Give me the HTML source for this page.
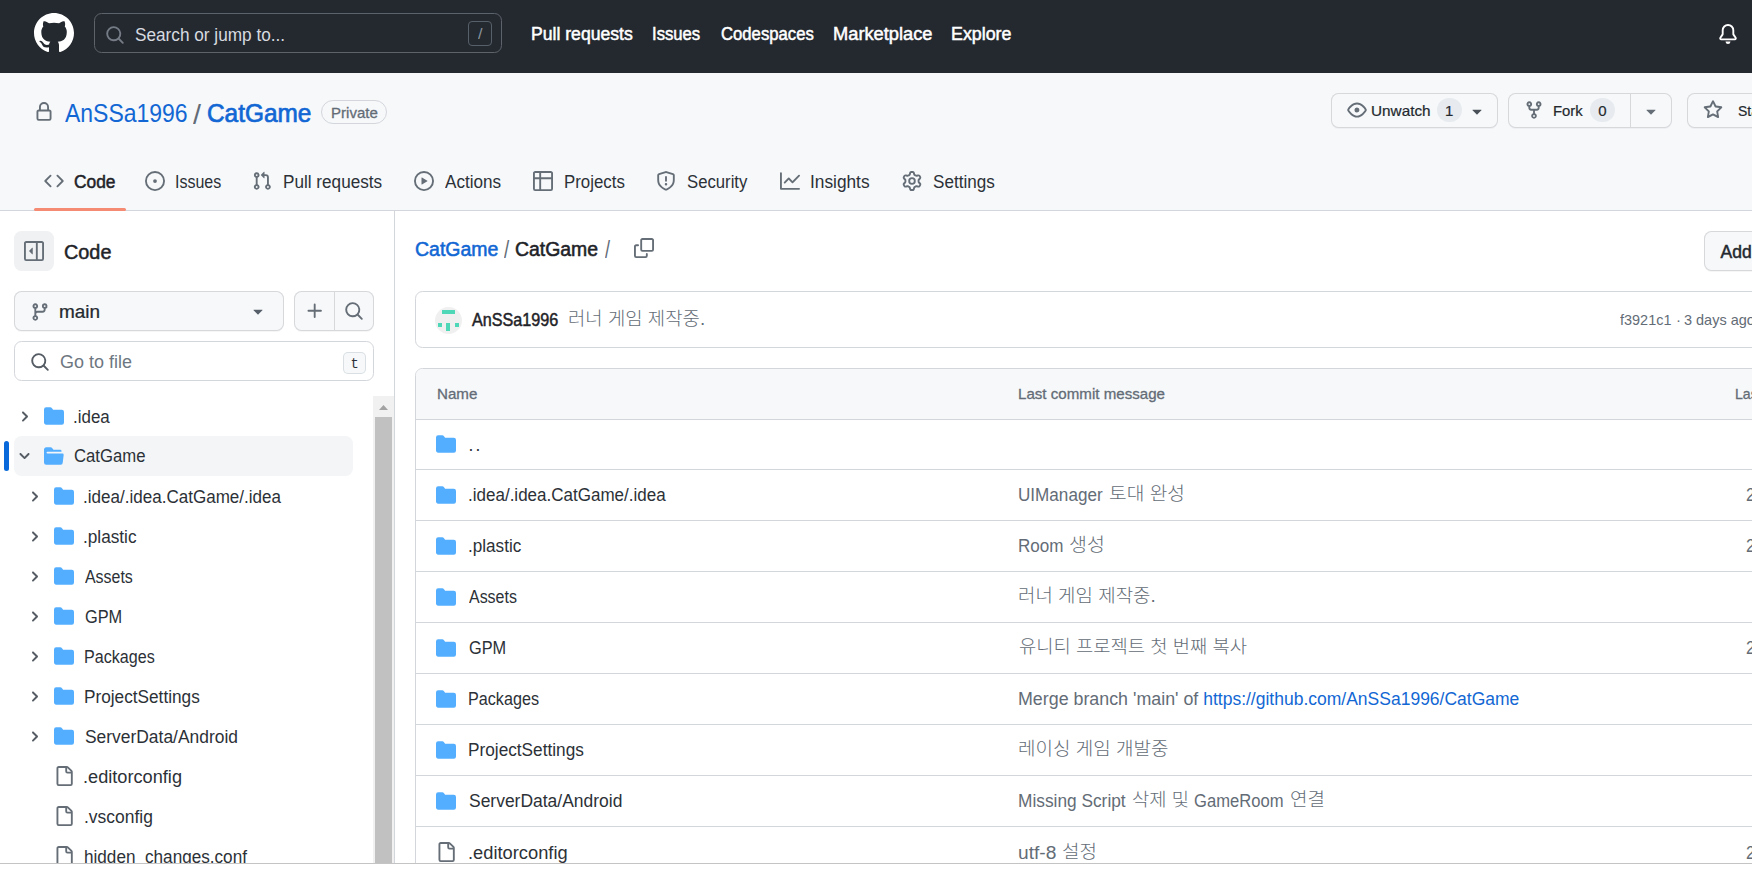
<!DOCTYPE html>
<html lang="ko"><head><meta charset="utf-8"><title>CatGame/CatGame at main · AnSSa1996/CatGame</title>
<style>
*{box-sizing:border-box}
html,body{margin:0;padding:0}
body{width:1752px;height:870px;overflow:hidden;background:#fff;position:relative;font-family:"Liberation Sans","Noto Sans CJK KR",sans-serif;color:#2c3137}
.a{position:absolute}
.t{position:absolute;white-space:pre;line-height:1.2;transform-origin:0 0}
.ic{position:absolute;display:block;overflow:visible}
.btn{position:absolute;background:#f6f8fa;border:1px solid rgba(31,35,40,.15);border-radius:7.5px;box-shadow:0 1px 0 rgba(31,35,40,.04)}
.pill{position:absolute;background:rgba(175,184,193,.2);border-radius:12px}
.ln{position:absolute;height:1px;background:#d3d6db;left:416px;right:0}
</style></head>
<body>
<header>
<div class="a" style="left:0;top:0;width:1752px;height:73px;background:#24292f"></div>
<div class="a" style="left:0;top:73px;width:1752px;height:138px;background:#f6f8fa;border-bottom:1px solid #d3d6db"></div>
<svg class="ic" style="left:34px;top:13px" width="40" height="40" viewBox="0 0 16 16" fill="#fff"><path d="M8 0c4.42 0 8 3.58 8 8a8.013 8.013 0 0 1-5.45 7.59c-.4.08-.55-.17-.55-.38 0-.27.01-1.13.01-2.2 0-.75-.25-1.23-.54-1.48 1.78-.2 3.65-.88 3.65-3.95 0-.88-.31-1.59-.82-2.15.08-.2.36-1.02-.08-2.12 0 0-.67-.22-2.2.82-.64-.18-1.32-.27-2-.27-.68 0-1.36.09-2 .27-1.53-1.03-2.2-.82-2.2-.82-.44 1.1-.16 1.92-.08 2.12-.51.56-.82 1.28-.82 2.15 0 3.06 1.86 3.75 3.64 3.95-.23.2-.44.55-.51 1.07-.46.21-1.61.55-2.33-.66-.15-.24-.6-.83-1.23-.82-.67.01-.27.38.01.53.34.19.73.9.82 1.13.16.45.68 1.31 2.69.94 0 .67.01 1.3.01 1.49 0 .21-.15.45-.55.38A7.995 7.995 0 0 1 0 8c0-4.42 3.58-8 8-8Z"/></svg>
<div class="a" style="left:94px;top:13px;width:408px;height:40px;border:1px solid #5d636b;border-radius:7.5px"></div>
<svg class="ic" style="left:105px;top:24.5px" width="20" height="20" viewBox="0 0 16 16" fill="#757c86"><path d="M10.68 11.74a6 6 0 0 1-7.922-8.982 6 6 0 0 1 8.982 7.922l3.04 3.04a.749.749 0 0 1-.326 1.275.749.749 0 0 1-.734-.215ZM11.5 7a4.499 4.499 0 1 0-8.997 0A4.499 4.499 0 0 0 11.5 7Z"/></svg>
<div class="a" style="left:468px;top:21px;width:24px;height:25px;border:1px solid #57606a;border-radius:4px"></div>
<svg class="ic" style="left:1718px;top:24px" width="20" height="20" viewBox="0 0 16 16" fill="#fff"><path d="M8 16a2 2 0 0 0 1.985-1.75c.017-.137-.097-.25-.235-.25h-3.5c-.138 0-.252.113-.235.25A2 2 0 0 0 8 16ZM3 5a5 5 0 0 1 10 0v2.947c0 .05.015.098.042.139l1.703 2.555A1.519 1.519 0 0 1 13.482 13H2.518a1.516 1.516 0 0 1-1.263-2.36l1.703-2.554A.255.255 0 0 0 3 7.947Zm5-3.5A3.5 3.5 0 0 0 4.5 5v2.947c0 .346-.102.683-.294.97l-1.703 2.556a.017.017 0 0 0-.003.01l.001.006c0 .002.002.004.004.006l.006.004.007.001h10.964l.007-.001.006-.004.004-.006.001-.007a.017.017 0 0 0-.003-.01l-1.703-2.554a1.745 1.745 0 0 1-.294-.97V5A3.5 3.5 0 0 0 8 1.5Z"/></svg>
<span class="t" style='left:135.00px;top:25.00px;font-size:17.5px;color:#d7dbe0;transform:scaleX(0.9826);'>Search or jump to...</span>
<span class="t" style='left:477.80px;top:25.20px;font-size:15px;color:#8b949e;transform:scaleX(1.0800);'>/</span>
<a class="t" style='left:530.99px;top:23.90px;font-size:17.5px;-webkit-text-stroke:0.028em;color:#ffffff;transform:scaleX(1.0058);'>Pull requests</a>
<a class="t" style='left:652.05px;top:23.90px;font-size:17.5px;-webkit-text-stroke:0.028em;color:#ffffff;transform:scaleX(0.9533);'>Issues</a>
<a class="t" style='left:720.50px;top:23.90px;font-size:17.5px;-webkit-text-stroke:0.028em;color:#ffffff;transform:scaleX(0.9535);'>Codespaces</a>
<a class="t" style='left:832.96px;top:23.90px;font-size:17.5px;-webkit-text-stroke:0.028em;color:#ffffff;transform:scaleX(1.0440);'>Marketplace</a>
<a class="t" style='left:950.98px;top:23.90px;font-size:17.5px;-webkit-text-stroke:0.028em;color:#ffffff;transform:scaleX(1.0190);'>Explore</a>
</header>
<nav>
<svg class="ic" style="left:34px;top:102px" width="20" height="20" viewBox="0 0 16 16" fill="#656d76"><path d="M4 4a4 4 0 0 1 8 0v2h.25c.966 0 1.75.784 1.75 1.75v5.5A1.75 1.75 0 0 1 12.25 15h-8.5A1.75 1.75 0 0 1 2 13.25v-5.5C2 6.784 2.784 6 3.75 6H4Zm8.25 3.5h-8.5a.25.25 0 0 0-.25.25v5.5c0 .138.112.25.25.25h8.5a.25.25 0 0 0 .25-.25v-5.5a.25.25 0 0 0-.25-.25ZM10.5 6V4a2.5 2.5 0 1 0-5 0v2Z"/></svg>
<div class="a" style="left:321px;top:100px;width:66px;height:24px;border:1px solid #d3d6db;border-radius:12px"></div>
<div class="btn" style="left:1331px;top:93px;width:167px;height:35px"></div>
<svg class="ic" style="left:1347px;top:100px" width="20" height="20" viewBox="0 0 16 16" fill="#656d76"><path d="M8 2c1.981 0 3.671.992 4.933 2.078 1.27 1.091 2.187 2.345 2.637 3.023a1.62 1.62 0 0 1 0 1.798c-.45.678-1.367 1.932-2.637 3.023C11.67 13.008 9.981 14 8 14c-1.981 0-3.671-.992-4.933-2.078C1.797 10.83.88 9.576.43 8.898a1.62 1.62 0 0 1 0-1.798c.45-.677 1.367-1.931 2.637-3.022C4.33 2.992 6.019 2 8 2ZM1.679 7.932a.12.12 0 0 0 0 .136c.411.622 1.241 1.75 2.366 2.717C5.176 11.758 6.527 12.5 8 12.5c1.473 0 2.825-.742 3.955-1.715 1.124-.967 1.954-2.096 2.366-2.717a.12.12 0 0 0 0-.136c-.412-.621-1.242-1.75-2.366-2.717C10.824 4.242 9.473 3.5 8 3.5c-1.473 0-2.825.742-3.955 1.715-1.124.967-1.954 2.096-2.366 2.717ZM8 10a2 2 0 1 1-.001-3.999A2 2 0 0 1 8 10Z"/></svg>
<div class="pill" style="left:1437px;top:98px;width:24.5px;height:24px"></div>
<svg class="ic" style="left:1467px;top:100.5px" width="20" height="20" viewBox="0 0 16 16" fill="#4a5058"><path d="m4.427 7.427 3.396 3.396a.25.25 0 0 0 .354 0l3.396-3.396A.25.25 0 0 0 11.396 7H4.604a.25.25 0 0 0-.177.427Z"/></svg>
<div class="btn" style="left:1508px;top:93px;width:164px;height:35px"></div>
<div class="a" style="left:1630px;top:94px;width:1px;height:33px;background:rgba(31,35,40,.15)"></div>
<svg class="ic" style="left:1524px;top:100px" width="20" height="20" viewBox="0 0 16 16" fill="#656d76"><path d="M5 5.372v.878c0 .414.336.75.75.75h4.5a.75.75 0 0 0 .75-.75v-.878a2.25 2.25 0 1 1 1.500 0v.878a2.25 2.25 0 0 1-2.250 2.250h-1.500v2.128a2.251 2.251 0 1 1-1.500 0V8.500h-1.500A2.25 2.25 0 0 1 3.500 6.250v-.878a2.25 2.25 0 1 1 1.500 0ZM5 3.250a.75.75 0 1 0-1.500 0 .75.75 0 0 0 1.500 0Zm6.750.750a.75.75 0 1 0 0-1.500.75.75 0 0 0 0 1.500Zm-3 8.750a.75.75 0 1 0-1.500 0 .75.75 0 0 0 1.500 0Z"/></svg>
<div class="pill" style="left:1590px;top:98px;width:24.5px;height:24px"></div>
<svg class="ic" style="left:1640.5px;top:100.5px" width="20" height="20" viewBox="0 0 16 16" fill="#656d76"><path d="m4.427 7.427 3.396 3.396a.25.25 0 0 0 .354 0l3.396-3.396A.25.25 0 0 0 11.396 7H4.604a.25.25 0 0 0-.177.427Z"/></svg>
<div class="btn" style="left:1687px;top:93px;width:120px;height:35px"></div>
<svg class="ic" style="left:1703px;top:100px" width="20" height="20" viewBox="0 0 16 16" fill="#656d76"><path d="M8 .25a.75.75 0 0 1 .673.418l1.882 3.815 4.21.612a.75.75 0 0 1 .416 1.279l-3.046 2.97.719 4.192a.751.751 0 0 1-1.088.791L8 12.347l-3.766 1.98a.75.75 0 0 1-1.088-.79l.72-4.194L.818 6.374a.75.75 0 0 1 .416-1.28l4.21-.611L7.327.668A.75.75 0 0 1 8 .25Zm0 2.445L6.615 5.5a.75.75 0 0 1-.564.41l-3.097.45 2.24 2.184a.75.75 0 0 1 .216.664l-.528 3.084 2.769-1.456a.75.75 0 0 1 .698 0l2.77 1.456-.53-3.084a.75.75 0 0 1 .216-.664l2.24-2.183-3.096-.45a.75.75 0 0 1-.564-.41L8 2.694Z"/></svg>
<svg class="ic" style="left:44px;top:171px" width="20" height="20" viewBox="0 0 16 16" fill="#656d76"><path d="m11.28 3.22 4.25 4.25a.75.75 0 0 1 0 1.06l-4.25 4.25a.749.749 0 0 1-1.275-.326.749.749 0 0 1 .215-.734L13.94 8l-3.72-3.72a.749.749 0 0 1 .326-1.275.749.749 0 0 1 .734.215Zm-6.56 0a.751.751 0 0 1 1.042.018.751.751 0 0 1 .018 1.042L2.06 8l3.72 3.72a.749.749 0 0 1-.326 1.275.749.749 0 0 1-.734-.215L.47 8.53a.75.75 0 0 1 0-1.06Z"/></svg>
<svg class="ic" style="left:145px;top:171px" width="20" height="20" viewBox="0 0 16 16" fill="#656d76"><path d="M8 9.5a1.5 1.5 0 1 0 0-3 1.5 1.5 0 0 0 0 3Z M8 0a8 8 0 1 1 0 16A8 8 0 0 1 8 0ZM1.5 8a6.5 6.5 0 1 0 13 0 6.5 6.5 0 0 0-13 0Z"/></svg>
<svg class="ic" style="left:251.9px;top:171px" width="20" height="20" viewBox="0 0 16 16" fill="#656d76"><path d="M1.5 3.25a2.25 2.25 0 1 1 3 2.122v5.256a2.251 2.251 0 1 1-1.5 0V5.372A2.25 2.25 0 0 1 1.5 3.25Zm5.677-.177L9.573.677A.25.25 0 0 1 10 .854V2.5h1A2.5 2.5 0 0 1 13.5 5v5.628a2.251 2.251 0 1 1-1.5 0V5a1 1 0 0 0-1-1h-1v1.646a.25.25 0 0 1-.427.177L7.177 3.427a.25.25 0 0 1 0-.354ZM3.75 2.5a.75.75 0 1 0 0 1.5.75.75 0 0 0 0-1.5Zm0 9.5a.75.75 0 1 0 0 1.5.75.75 0 0 0 0-1.5Zm8.25.75a.75.75 0 1 0 1.5 0 .75.75 0 0 0-1.5 0Z"/></svg>
<svg class="ic" style="left:414px;top:171px" width="20" height="20" viewBox="0 0 16 16" fill="#656d76"><path d="M8 0a8 8 0 1 1 0 16A8 8 0 0 1 8 0ZM1.5 8a6.5 6.5 0 1 0 13 0 6.5 6.5 0 0 0-13 0Zm4.879-2.773 4.264 2.559a.25.25 0 0 1 0 .428l-4.264 2.559A.25.25 0 0 1 6 10.559V5.442a.25.25 0 0 1 .379-.215Z"/></svg>
<svg class="ic" style="left:533px;top:171px" width="20" height="20" viewBox="0 0 16 16" fill="#656d76"><path d="M0 1.75C0 .784.784 0 1.75 0h12.5C15.216 0 16 .784 16 1.75v12.5A1.75 1.75 0 0 1 14.25 16H1.75A1.75 1.75 0 0 1 0 14.25ZM6.5 6.5v8h7.75a.25.25 0 0 0 .25-.25V6.5Zm8-1.5V1.75a.25.25 0 0 0-.25-.25H6.5V5Zm-13 1.5v7.75c0 .138.112.25.25.25H5v-8ZM5 5V1.5H1.75a.25.25 0 0 0-.25.25V5Z"/></svg>
<svg class="ic" style="left:656.25px;top:171px" width="20" height="20" viewBox="0 0 16 16" fill="#656d76"><path d="M7.467.133a1.748 1.748 0 0 1 1.066 0l5.25 1.68A1.75 1.75 0 0 1 15 3.48V7c0 1.566-.32 3.182-1.303 4.682-.983 1.498-2.585 2.813-5.032 3.855a1.697 1.697 0 0 1-1.33 0c-2.447-1.042-4.049-2.357-5.032-3.855C1.32 10.182 1 8.566 1 7V3.48a1.75 1.75 0 0 1 1.217-1.667Zm.61 1.429a.25.25 0 0 0-.153 0l-5.25 1.68a.25.25 0 0 0-.174.238V7c0 1.358.275 2.666 1.057 3.86.784 1.194 2.121 2.34 4.366 3.297a.196.196 0 0 0 .154 0c2.245-.956 3.582-2.104 4.366-3.298C13.225 9.666 13.5 8.36 13.5 7V3.48a.251.251 0 0 0-.174-.237l-5.25-1.68ZM8.75 4.75v3a.75.75 0 0 1-1.5 0v-3a.75.75 0 0 1 1.5 0ZM9 10.5a1 1 0 1 1-2 0 1 1 0 0 1 2 0Z"/></svg>
<svg class="ic" style="left:780px;top:171px" width="20" height="20" viewBox="0 0 16 16" fill="#656d76"><path d="M1.5 1.75V13.5h13.75a.75.75 0 0 1 0 1.5H.75a.75.75 0 0 1-.75-.75V1.75a.75.75 0 0 1 1.5 0Zm14.28 2.53-5.25 5.25a.75.75 0 0 1-1.06 0L7 7.06 4.28 9.78a.751.751 0 0 1-1.042-.018.751.751 0 0 1-.018-1.042l3.25-3.25a.75.75 0 0 1 1.06 0L10 7.94l4.72-4.72a.751.751 0 0 1 1.042.018.751.751 0 0 1 .018 1.042Z"/></svg>
<svg class="ic" style="left:902px;top:171px" width="20" height="20" viewBox="0 0 16 16" fill="#656d76"><path d="M8 0a8.2 8.2 0 0 1 .701.031C9.444.095 9.99.645 10.16 1.29l.288 1.107c.018.066.079.158.212.224.231.114.454.243.668.386.123.082.233.09.299.071l1.103-.303c.644-.176 1.392.021 1.82.63.27.385.506.792.704 1.218.315.675.111 1.422-.364 1.891l-.814.806c-.049.048-.098.147-.088.294.016.257.016.515 0 .772-.01.147.038.246.088.294l.814.806c.475.469.679 1.216.364 1.891a7.977 7.977 0 0 1-.704 1.217c-.428.61-1.176.807-1.82.63l-1.102-.302c-.067-.019-.177-.011-.3.071a5.909 5.909 0 0 1-.668.386c-.133.066-.194.158-.211.224l-.29 1.106c-.168.646-.715 1.196-1.458 1.26a8.006 8.006 0 0 1-1.402 0c-.743-.064-1.289-.614-1.458-1.26l-.289-1.106c-.018-.066-.079-.158-.212-.224a5.738 5.738 0 0 1-.668-.386c-.123-.082-.233-.09-.299-.071l-1.103.303c-.644.176-1.392-.021-1.82-.63a8.12 8.12 0 0 1-.704-1.218c-.315-.675-.111-1.422.363-1.891l.815-.806c.05-.048.098-.147.088-.294a6.214 6.214 0 0 1 0-.772c.01-.147-.038-.246-.088-.294l-.815-.806C.635 6.045.431 5.298.746 4.623a7.92 7.92 0 0 1 .704-1.217c.428-.61 1.176-.807 1.82-.63l1.102.302c.067.019.177.011.3-.071.214-.143.437-.272.668-.386.133-.066.194-.158.211-.224l.29-1.106C6.009.645 6.556.095 7.299.03 7.53.01 7.764 0 8 0Zm-.571 1.525c-.036.003-.108.036-.137.146l-.289 1.105c-.147.561-.549.967-.998 1.189-.173.086-.34.183-.5.29-.417.278-.97.423-1.529.27l-1.103-.303c-.109-.03-.175.016-.195.045-.22.312-.412.644-.573.99-.014.031-.021.11.059.19l.815.806c.411.406.562.957.53 1.456a4.709 4.709 0 0 0 0 .582c.032.499-.119 1.05-.53 1.456l-.815.806c-.081.08-.073.159-.059.19.162.346.353.677.573.989.02.03.085.076.195.046l1.102-.303c.56-.153 1.113-.008 1.53.27.161.107.328.204.501.29.447.222.85.629.997 1.189l.289 1.105c.029.109.101.143.137.146a6.6 6.6 0 0 0 1.142 0c.036-.003.108-.036.137-.146l.289-1.105c.147-.561.549-.967.998-1.189.173-.086.34-.183.5-.29.417-.278.97-.423 1.529-.27l1.103.303c.109.029.175-.016.195-.045.22-.313.411-.644.573-.99.014-.031.021-.11-.059-.19l-.815-.806c-.411-.406-.562-.957-.53-1.456a4.709 4.709 0 0 0 0-.582c-.032-.499.119-1.05.53-1.456l.815-.806c.081-.08.073-.159.059-.19a6.464 6.464 0 0 0-.573-.989c-.02-.03-.085-.076-.195-.046l-1.102.303c-.56.153-1.113.008-1.53-.27a4.44 4.44 0 0 0-.501-.29c-.447-.222-.85-.629-.997-1.189l-.289-1.105c-.029-.11-.101-.143-.137-.146a6.6 6.6 0 0 0-1.142 0ZM11 8a3 3 0 1 1-6 0 3 3 0 0 1 6 0ZM9.500 8a1.5 1.5 0 1 0-3.001.001A1.5 1.5 0 0 0 9.500 8Z"/></svg>
<div class="a" style="left:34px;top:208px;width:91.5px;height:3px;background:#f68b74;border-radius:1.5px"></div>
<a class="t" style='left:65.00px;top:97.50px;font-size:25px;color:#1267d4;transform:scaleX(0.9189);'>AnSSa1996</a>
<span class="t" style='left:193.00px;top:98.30px;font-size:28px;color:#636c76;transform:scaleX(1.0250);'>/</span>
<a class="t" style='left:207.02px;top:97.50px;font-size:25px;-webkit-text-stroke:0.028em;color:#1267d4;transform:scaleX(0.9755);'>CatGame</a>
<span class="t" style='left:331.10px;top:103.90px;font-size:15px;-webkit-text-stroke:0.02em;color:#636c76;'>Private</span>
<a class="t" style='left:74.20px;top:171.50px;font-size:17.5px;-webkit-text-stroke:0.028em;color:#1f2328;transform:scaleX(0.9926);'>Code</a>
<a class="t" style='left:175.28px;top:171.50px;font-size:17.5px;transform:scaleX(0.9152);'>Issues</a>
<a class="t" style='left:283.22px;top:171.50px;font-size:17.5px;transform:scaleX(0.9799);'>Pull requests</a>
<a class="t" style='left:445.40px;top:171.50px;font-size:17.5px;transform:scaleX(0.9785);'>Actions</a>
<a class="t" style='left:563.74px;top:171.50px;font-size:17.5px;transform:scaleX(0.9621);'>Projects</a>
<a class="t" style='left:687.40px;top:171.50px;font-size:17.5px;transform:scaleX(0.9549);'>Security</a>
<a class="t" style='left:810.21px;top:171.50px;font-size:17.5px;transform:scaleX(0.9872);'>Insights</a>
<a class="t" style='left:933.00px;top:171.50px;font-size:17.5px;transform:scaleX(0.9766);'>Settings</a>
<span class="t" style='left:1370.98px;top:102.00px;font-size:15px;-webkit-text-stroke:0.014em;color:#24292f;transform:scaleX(1.0207);'>Unwatch</span>
<span class="t" style='left:1445.00px;top:102.00px;font-size:15px;-webkit-text-stroke:0.014em;color:#24292f;'>1</span>
<span class="t" style='left:1553.01px;top:102.00px;font-size:15px;-webkit-text-stroke:0.014em;color:#24292f;transform:scaleX(0.9898);'>Fork</span>
<span class="t" style='left:1598.20px;top:102.00px;font-size:15px;-webkit-text-stroke:0.014em;color:#24292f;'>0</span>
<span class="t" style='left:1737.80px;top:102.00px;font-size:15px;-webkit-text-stroke:0.014em;color:#24292f;transform:scaleX(0.9300);'>Star</span>
</nav>
<aside>
<div class="a" style="left:394px;top:211px;width:1px;height:652px;background:#d3d6db"></div>
<div class="a" style="left:14px;top:231px;width:40px;height:40px;background:#eff1f3;border-radius:7.5px"></div>
<svg class="ic" style="left:24px;top:241px" width="20" height="20" viewBox="0 0 16 16" fill="#656d76"><path d="m4.177 7.823 2.396-2.396A.25.25 0 0 1 7 5.604v4.792a.25.25 0 0 1-.427.177L4.177 8.177a.25.25 0 0 1 0-.354Z M0 1.75C0 .784.784 0 1.75 0h12.5C15.216 0 16 .784 16 1.75v12.5A1.75 1.75 0 0 1 14.25 16H1.75A1.75 1.75 0 0 1 0 14.25Zm1.75-.25a.25.25 0 0 0-.25.25v12.500c0 .138.112.25.25.25H9.5v-13Zm12.5 13a.25.25 0 0 0 .25-.25V1.75a.25.25 0 0 0-.25-.25H11v13Z"/></svg>
<div class="btn" style="left:14px;top:291px;width:270px;height:40px"></div>
<svg class="ic" style="left:29.5px;top:301.5px" width="20" height="20" viewBox="0 0 16 16" fill="#656d76"><path d="M9.5 3.25a2.25 2.25 0 1 1 3 2.122V6A2.5 2.5 0 0 1 10 8.5H6a1 1 0 0 0-1 1v1.128a2.251 2.251 0 1 1-1.5 0V5.372a2.25 2.25 0 1 1 1.5 0v1.836A2.493 2.493 0 0 1 6 7h4a1 1 0 0 0 1-1v-.628A2.25 2.25 0 0 1 9.5 3.25Zm-6 0a.75.75 0 1 0 1.5 0 .75.75 0 0 0-1.5 0Zm8.25-.75a.75.75 0 1 0 0 1.5.75.75 0 0 0 0-1.5ZM4.25 12a.75.75 0 1 0 0 1.5.75.75 0 0 0 0-1.5Z"/></svg>
<svg class="ic" style="left:247.5px;top:301px" width="20" height="20" viewBox="0 0 16 16" fill="#57606a"><path d="m4.427 7.427 3.396 3.396a.25.25 0 0 0 .354 0l3.396-3.396A.25.25 0 0 0 11.396 7H4.604a.25.25 0 0 0-.177.427Z"/></svg>
<div class="btn" style="left:294px;top:291px;width:80px;height:40px"></div>
<div class="a" style="left:334px;top:292px;width:1px;height:38px;background:rgba(31,35,40,.15)"></div>
<svg class="ic" style="left:304.5px;top:301px" width="20" height="20" viewBox="0 0 16 16" fill="#656d76"><path d="M7.75 2a.75.75 0 0 1 .75.75V7h4.25a.75.75 0 0 1 0 1.5H8.5v4.25a.75.75 0 0 1-1.5 0V8.5H2.75a.75.75 0 0 1 0-1.5H7V2.75A.75.75 0 0 1 7.75 2Z"/></svg>
<svg class="ic" style="left:344px;top:301px" width="20" height="20" viewBox="0 0 16 16" fill="#656d76"><path d="M10.68 11.74a6 6 0 0 1-7.922-8.982 6 6 0 0 1 8.982 7.922l3.04 3.04a.749.749 0 0 1-.326 1.275.749.749 0 0 1-.734-.215ZM11.5 7a4.499 4.499 0 1 0-8.997 0A4.499 4.499 0 0 0 11.5 7Z"/></svg>
<div class="a" style="left:14px;top:341px;width:360px;height:40px;background:#fff;border:1px solid #d3d6db;border-radius:7.5px"></div>
<svg class="ic" style="left:30px;top:352px" width="20" height="20" viewBox="0 0 16 16" fill="#555c64"><path d="M10.68 11.74a6 6 0 0 1-7.922-8.982 6 6 0 0 1 8.982 7.922l3.04 3.04a.749.749 0 0 1-.326 1.275.749.749 0 0 1-.734-.215ZM11.5 7a4.499 4.499 0 1 0-8.997 0A4.499 4.499 0 0 0 11.5 7Z"/></svg>
<div class="a" style="left:343px;top:352px;width:23px;height:22px;background:#f6f8fa;border:1px solid rgba(175,184,193,.4);border-radius:5px"></div>
<div class="a" style="left:14px;top:436px;width:339px;height:40px;background:rgba(208,215,222,.26);border-radius:7.5px"></div>
<div class="a" style="left:4px;top:441px;width:5px;height:30px;background:#0969da;border-radius:3px"></div>
<svg class="ic" style="left:17px;top:408.5px" width="15" height="15" viewBox="0 0 12 12" fill="#555c64"><path d="M4.7 10c-.2 0-.4-.1-.5-.2-.3-.3-.3-.8 0-1.100L6.900 6 4.200 3.300c-.3-.3-.3-.8 0-1.100.3-.3.8-.3 1.100 0l3.300 3.200c.3.3.3.8 0 1.100L5.300 9.700c-.2.2-.4.3-.6.3Z"/></svg>
<svg class="ic" style="left:44px;top:406px" width="20" height="20" viewBox="0 0 16 16" fill="#54aeff"><path d="M1.75 1A1.75 1.75 0 0 0 0 2.750v10.500C0 14.216.784 15 1.750 15h12.500A1.750 1.750 0 0 0 16 13.250v-8.500A1.750 1.750 0 0 0 14.250 3H7.500a.25.25 0 0 1-.2-.1l-.9-1.200C6.070 1.260 5.550 1 5 1H1.750Z"/></svg>
<svg class="ic" style="left:16.7px;top:447.7px" width="15" height="15" viewBox="0 0 12 12" fill="#555c64"><path d="M6 8.825c-.2 0-.4-.1-.5-.2l-3.300-3.300c-.3-.3-.3-.8 0-1.100.3-.3.8-.3 1.100 0l2.700 2.700 2.700-2.700c.3-.3.8-.3 1.100 0 .3.3.3.8 0 1.100l-3.200 3.200c-.2.2-.4.3-.6.3Z"/></svg>
<svg class="ic" style="left:44px;top:446px" width="20" height="20" viewBox="0 0 16 16" fill="#54aeff"><path d="M.513 1.513A1.750 1.750 0 0 1 1.750 1h3.500c.55 0 1.070.26 1.400.7l.9 1.200a.25.25 0 0 0 .2.1H13a1 1 0 0 1 1 1v.5H2.750a.75.75 0 0 0 0 1.500h11.978a1 1 0 0 1 .994 1.117L15 13.250A1.750 1.750 0 0 1 13.250 15H1.750A1.750 1.750 0 0 1 0 13.250V2.750c0-.464.184-.91.513-1.237Z"/></svg>
<svg class="ic" style="left:27px;top:488.5px" width="15" height="15" viewBox="0 0 12 12" fill="#555c64"><path d="M4.7 10c-.2 0-.4-.1-.5-.2-.3-.3-.3-.8 0-1.100L6.900 6 4.200 3.300c-.3-.3-.3-.8 0-1.100.3-.3.8-.3 1.100 0l3.300 3.200c.3.3.3.8 0 1.100L5.300 9.700c-.2.2-.4.3-.6.3Z"/></svg>
<svg class="ic" style="left:54px;top:486px" width="20" height="20" viewBox="0 0 16 16" fill="#54aeff"><path d="M1.75 1A1.75 1.75 0 0 0 0 2.750v10.500C0 14.216.784 15 1.750 15h12.500A1.750 1.750 0 0 0 16 13.250v-8.500A1.750 1.750 0 0 0 14.250 3H7.500a.25.25 0 0 1-.2-.1l-.9-1.200C6.070 1.260 5.550 1 5 1H1.750Z"/></svg>
<svg class="ic" style="left:27px;top:528.5px" width="15" height="15" viewBox="0 0 12 12" fill="#555c64"><path d="M4.7 10c-.2 0-.4-.1-.5-.2-.3-.3-.3-.8 0-1.100L6.900 6 4.200 3.300c-.3-.3-.3-.8 0-1.100.3-.3.8-.3 1.100 0l3.300 3.200c.3.3.3.8 0 1.100L5.300 9.700c-.2.2-.4.3-.6.3Z"/></svg>
<svg class="ic" style="left:54px;top:526px" width="20" height="20" viewBox="0 0 16 16" fill="#54aeff"><path d="M1.75 1A1.75 1.75 0 0 0 0 2.750v10.500C0 14.216.784 15 1.750 15h12.500A1.750 1.750 0 0 0 16 13.250v-8.500A1.750 1.750 0 0 0 14.250 3H7.500a.25.25 0 0 1-.2-.1l-.9-1.200C6.070 1.260 5.550 1 5 1H1.750Z"/></svg>
<svg class="ic" style="left:27px;top:568.5px" width="15" height="15" viewBox="0 0 12 12" fill="#555c64"><path d="M4.7 10c-.2 0-.4-.1-.5-.2-.3-.3-.3-.8 0-1.100L6.900 6 4.200 3.300c-.3-.3-.3-.8 0-1.100.3-.3.8-.3 1.100 0l3.300 3.200c.3.3.3.8 0 1.100L5.300 9.700c-.2.2-.4.3-.6.3Z"/></svg>
<svg class="ic" style="left:54px;top:566px" width="20" height="20" viewBox="0 0 16 16" fill="#54aeff"><path d="M1.75 1A1.75 1.75 0 0 0 0 2.750v10.500C0 14.216.784 15 1.750 15h12.500A1.750 1.750 0 0 0 16 13.250v-8.500A1.750 1.750 0 0 0 14.250 3H7.500a.25.25 0 0 1-.2-.1l-.9-1.200C6.070 1.260 5.550 1 5 1H1.750Z"/></svg>
<svg class="ic" style="left:27px;top:608.5px" width="15" height="15" viewBox="0 0 12 12" fill="#555c64"><path d="M4.7 10c-.2 0-.4-.1-.5-.2-.3-.3-.3-.8 0-1.100L6.900 6 4.200 3.300c-.3-.3-.3-.8 0-1.100.3-.3.8-.3 1.100 0l3.300 3.200c.3.3.3.8 0 1.100L5.300 9.700c-.2.2-.4.3-.6.3Z"/></svg>
<svg class="ic" style="left:54px;top:606px" width="20" height="20" viewBox="0 0 16 16" fill="#54aeff"><path d="M1.75 1A1.75 1.75 0 0 0 0 2.750v10.500C0 14.216.784 15 1.750 15h12.500A1.750 1.750 0 0 0 16 13.250v-8.500A1.750 1.750 0 0 0 14.250 3H7.500a.25.25 0 0 1-.2-.1l-.9-1.200C6.070 1.260 5.550 1 5 1H1.750Z"/></svg>
<svg class="ic" style="left:27px;top:648.5px" width="15" height="15" viewBox="0 0 12 12" fill="#555c64"><path d="M4.7 10c-.2 0-.4-.1-.5-.2-.3-.3-.3-.8 0-1.100L6.900 6 4.200 3.300c-.3-.3-.3-.8 0-1.100.3-.3.8-.3 1.100 0l3.300 3.200c.3.3.3.8 0 1.100L5.300 9.700c-.2.2-.4.3-.6.3Z"/></svg>
<svg class="ic" style="left:54px;top:646px" width="20" height="20" viewBox="0 0 16 16" fill="#54aeff"><path d="M1.75 1A1.75 1.75 0 0 0 0 2.750v10.500C0 14.216.784 15 1.750 15h12.500A1.750 1.750 0 0 0 16 13.250v-8.500A1.750 1.750 0 0 0 14.250 3H7.500a.25.25 0 0 1-.2-.1l-.9-1.200C6.070 1.260 5.550 1 5 1H1.750Z"/></svg>
<svg class="ic" style="left:27px;top:688.5px" width="15" height="15" viewBox="0 0 12 12" fill="#555c64"><path d="M4.7 10c-.2 0-.4-.1-.5-.2-.3-.3-.3-.8 0-1.100L6.900 6 4.200 3.300c-.3-.3-.3-.8 0-1.100.3-.3.8-.3 1.100 0l3.300 3.200c.3.3.3.8 0 1.100L5.300 9.700c-.2.2-.4.3-.6.3Z"/></svg>
<svg class="ic" style="left:54px;top:686px" width="20" height="20" viewBox="0 0 16 16" fill="#54aeff"><path d="M1.75 1A1.75 1.75 0 0 0 0 2.750v10.500C0 14.216.784 15 1.750 15h12.500A1.750 1.750 0 0 0 16 13.250v-8.500A1.750 1.750 0 0 0 14.250 3H7.500a.25.25 0 0 1-.2-.1l-.9-1.200C6.070 1.260 5.550 1 5 1H1.750Z"/></svg>
<svg class="ic" style="left:27px;top:728.5px" width="15" height="15" viewBox="0 0 12 12" fill="#555c64"><path d="M4.7 10c-.2 0-.4-.1-.5-.2-.3-.3-.3-.8 0-1.100L6.900 6 4.200 3.300c-.3-.3-.3-.8 0-1.100.3-.3.8-.3 1.100 0l3.300 3.200c.3.3.3.8 0 1.100L5.300 9.700c-.2.2-.4.3-.6.3Z"/></svg>
<svg class="ic" style="left:54px;top:726px" width="20" height="20" viewBox="0 0 16 16" fill="#54aeff"><path d="M1.75 1A1.75 1.75 0 0 0 0 2.750v10.500C0 14.216.784 15 1.750 15h12.500A1.750 1.750 0 0 0 16 13.250v-8.500A1.750 1.750 0 0 0 14.250 3H7.500a.25.25 0 0 1-.2-.1l-.9-1.200C6.070 1.260 5.550 1 5 1H1.750Z"/></svg>
<svg class="ic" style="left:54px;top:766px" width="20" height="20" viewBox="0 0 16 16" fill="#656d76"><path d="M2 1.750C2 .784 2.784 0 3.750 0h6.586c.464 0 .909.184 1.237.513l2.914 2.914c.329.328.513.773.513 1.237v9.586A1.750 1.750 0 0 1 13.250 16h-9.500A1.750 1.750 0 0 1 2 14.250Zm1.750-.25a.25.25 0 0 0-.25.25v12.500c0 .138.112.25.25.25h9.500a.25.25 0 0 0 .25-.25V6h-2.750A1.750 1.750 0 0 1 9 4.250V1.500Zm6.750.062V4.250c0 .138.112.25.25.25h2.688l-.011-.013-2.914-2.914-.013-.011Z"/></svg>
<svg class="ic" style="left:54px;top:806px" width="20" height="20" viewBox="0 0 16 16" fill="#656d76"><path d="M2 1.750C2 .784 2.784 0 3.750 0h6.586c.464 0 .909.184 1.237.513l2.914 2.914c.329.328.513.773.513 1.237v9.586A1.750 1.750 0 0 1 13.250 16h-9.500A1.750 1.750 0 0 1 2 14.250Zm1.750-.25a.25.25 0 0 0-.25.25v12.500c0 .138.112.25.25.25h9.500a.25.25 0 0 0 .25-.25V6h-2.750A1.750 1.750 0 0 1 9 4.250V1.500Zm6.750.062V4.250c0 .138.112.25.25.25h2.688l-.011-.013-2.914-2.914-.013-.011Z"/></svg>
<svg class="ic" style="left:54px;top:846px" width="20" height="20" viewBox="0 0 16 16" fill="#656d76"><path d="M2 1.750C2 .784 2.784 0 3.750 0h6.586c.464 0 .909.184 1.237.513l2.914 2.914c.329.328.513.773.513 1.237v9.586A1.750 1.750 0 0 1 13.250 16h-9.500A1.750 1.750 0 0 1 2 14.250Zm1.750-.25a.25.25 0 0 0-.25.25v12.500c0 .138.112.25.25.25h9.500a.25.25 0 0 0 .25-.25V6h-2.750A1.750 1.750 0 0 1 9 4.250V1.500Zm6.750.062V4.250c0 .138.112.25.25.25h2.688l-.011-.013-2.914-2.914-.013-.011Z"/></svg>
<div class="a" style="left:373px;top:396px;width:21px;height:467px;background:#f1f1f1"></div>
<div class="a" style="left:375px;top:417px;width:17px;height:446px;background:#c1c1c1"></div>
<svg class="ic" style="left:379px;top:405px" width="9" height="5" viewBox="0 0 9 5"><path d="M0 5 L4.5 0 L9 5Z" fill="#a3a3a3"/></svg>
<span class="t" style='left:63.51px;top:240.00px;font-size:20px;-webkit-text-stroke:0.024em;color:#1f2328;transform:scaleX(0.9917);'>Code</span>
<span class="t" style='left:58.92px;top:301.50px;font-size:17.5px;-webkit-text-stroke:0.014em;color:#24292f;transform:scaleX(1.0829);'>main</span>
<span class="t" style='left:60.00px;top:352.00px;font-size:17.5px;color:#6e7781;transform:scaleX(1.0274);'>Go to file</span>
<span class="t" style='left:350.40px;top:356.50px;font-size:13.75px;font-family:"Liberation Mono", monospace;'>t</span>
<span class="t" style='left:73.23px;top:406.50px;font-size:17.5px;transform:scaleX(0.9673);'>.idea</span>
<span class="t" style='left:74.20px;top:445.90px;font-size:17.5px;transform:scaleX(0.9548);'>CatGame</span>
<span class="t" style='left:83.23px;top:486.50px;font-size:17.5px;transform:scaleX(0.9739);'>.idea/.idea.CatGame/.idea</span>
<span class="t" style='left:83.22px;top:526.50px;font-size:17.5px;transform:scaleX(0.9830);'>.plastic</span>
<span class="t" style='left:84.50px;top:566.50px;font-size:17.5px;transform:scaleX(0.9097);'>Assets</span>
<span class="t" style='left:84.50px;top:606.50px;font-size:17.5px;transform:scaleX(0.9342);'>GPM</span>
<span class="t" style='left:83.58px;top:646.50px;font-size:17.5px;transform:scaleX(0.9198);'>Packages</span>
<span class="t" style='left:83.52px;top:686.50px;font-size:17.5px;transform:scaleX(0.9833);'>ProjectSettings</span>
<span class="t" style='left:84.50px;top:726.50px;font-size:17.5px;transform:scaleX(0.9951);'>ServerData/Android</span>
<span class="t" style='left:83.46px;top:766.50px;font-size:17.5px;transform:scaleX(1.0384);'>.editorconfig</span>
<span class="t" style='left:83.50px;top:806.50px;font-size:17.5px;transform:scaleX(0.9966);'>.vsconfig</span>
<span class="t" style='left:83.52px;top:846.50px;font-size:17.5px;transform:scaleX(0.9793);'>hidden_changes.conf</span>
</aside>
<main>
<svg class="ic" style="left:634px;top:238px" width="20" height="20" viewBox="0 0 16 16" fill="#656d76"><path d="M0 6.750C0 5.784.784 5 1.750 5h1.500a.75.75 0 0 1 0 1.500h-1.500a.25.25 0 0 0-.25.25v7.500c0 .138.112.25.25.25h7.500a.25.25 0 0 0 .25-.25v-1.500a.75.75 0 0 1 1.500 0v1.500A1.750 1.750 0 0 1 9.250 16h-7.500A1.750 1.750 0 0 1 0 14.250Z M5 1.750C5 .784 5.784 0 6.750 0h7.500C15.216 0 16 .784 16 1.750v7.500A1.750 1.750 0 0 1 14.250 11h-7.500A1.750 1.750 0 0 1 5 9.250Zm1.750-.25a.25.25 0 0 0-.25.25v7.500c0 .138.112.25.25.25h7.500a.25.25 0 0 0 .25-.25v-7.500a.25.25 0 0 0-.25-.25Z"/></svg>
<div class="btn" style="left:1704px;top:231px;width:120px;height:40px"></div>
<div class="a" style="left:415px;top:291px;width:1400px;height:57px;border:1px solid #d3d6db;border-radius:7.5px;background:#fff"></div>
<div class="a" style="left:435px;top:307px;width:27px;height:27px;border-radius:50%;background:#f0f0f0;overflow:hidden"><div class="a" style="left:7.2px;top:3px;width:13px;height:4.4px;background:#4fd8b8"></div><div class="a" style="left:3px;top:15.8px;width:4.2px;height:4.2px;background:#4fd8b8"></div><div class="a" style="left:11.3px;top:15.8px;width:4.2px;height:8.4px;background:#4fd8b8"></div><div class="a" style="left:19.8px;top:15.8px;width:4.2px;height:4.2px;background:#4fd8b8"></div></div>
<div class="a" style="left:415px;top:368px;width:1400px;height:600px;border:1px solid #d3d6db;border-radius:7.5px;background:#fff;overflow:hidden"><div class="a" style="left:0;top:0;width:1400px;height:50px;background:#f6f8fa"></div></div>
<div class="ln" style="top:419px"></div>
<div class="ln" style="top:469px"></div>
<div class="ln" style="top:520px"></div>
<div class="ln" style="top:571px"></div>
<div class="ln" style="top:622px"></div>
<div class="ln" style="top:673px"></div>
<div class="ln" style="top:724px"></div>
<div class="ln" style="top:775px"></div>
<div class="ln" style="top:826px"></div>
<svg class="ic" style="left:436px;top:433.75px" width="20" height="20" viewBox="0 0 16 16" fill="#54aeff"><path d="M1.75 1A1.75 1.75 0 0 0 0 2.750v10.500C0 14.216.784 15 1.750 15h12.500A1.750 1.750 0 0 0 16 13.250v-8.500A1.750 1.750 0 0 0 14.250 3H7.500a.25.25 0 0 1-.2-.1l-.9-1.200C6.070 1.260 5.550 1 5 1H1.750Z"/></svg>
<svg class="ic" style="left:436px;top:485.0px" width="20" height="20" viewBox="0 0 16 16" fill="#54aeff"><path d="M1.75 1A1.75 1.75 0 0 0 0 2.750v10.500C0 14.216.784 15 1.750 15h12.500A1.750 1.750 0 0 0 16 13.250v-8.500A1.750 1.750 0 0 0 14.250 3H7.500a.25.25 0 0 1-.2-.1l-.9-1.200C6.070 1.260 5.550 1 5 1H1.750Z"/></svg>
<svg class="ic" style="left:436px;top:536.0px" width="20" height="20" viewBox="0 0 16 16" fill="#54aeff"><path d="M1.75 1A1.75 1.75 0 0 0 0 2.750v10.500C0 14.216.784 15 1.750 15h12.500A1.750 1.750 0 0 0 16 13.250v-8.500A1.750 1.750 0 0 0 14.250 3H7.500a.25.25 0 0 1-.2-.1l-.9-1.200C6.070 1.260 5.550 1 5 1H1.750Z"/></svg>
<svg class="ic" style="left:436px;top:587.0px" width="20" height="20" viewBox="0 0 16 16" fill="#54aeff"><path d="M1.75 1A1.75 1.75 0 0 0 0 2.750v10.500C0 14.216.784 15 1.750 15h12.500A1.750 1.750 0 0 0 16 13.250v-8.500A1.750 1.750 0 0 0 14.250 3H7.500a.25.25 0 0 1-.2-.1l-.9-1.200C6.070 1.260 5.550 1 5 1H1.750Z"/></svg>
<svg class="ic" style="left:436px;top:638.0px" width="20" height="20" viewBox="0 0 16 16" fill="#54aeff"><path d="M1.75 1A1.75 1.75 0 0 0 0 2.750v10.500C0 14.216.784 15 1.750 15h12.500A1.750 1.750 0 0 0 16 13.250v-8.500A1.750 1.750 0 0 0 14.250 3H7.500a.25.25 0 0 1-.2-.1l-.9-1.200C6.070 1.260 5.550 1 5 1H1.750Z"/></svg>
<svg class="ic" style="left:436px;top:689.0px" width="20" height="20" viewBox="0 0 16 16" fill="#54aeff"><path d="M1.75 1A1.75 1.75 0 0 0 0 2.750v10.500C0 14.216.784 15 1.750 15h12.500A1.750 1.750 0 0 0 16 13.250v-8.500A1.750 1.750 0 0 0 14.250 3H7.500a.25.25 0 0 1-.2-.1l-.9-1.200C6.070 1.260 5.550 1 5 1H1.750Z"/></svg>
<svg class="ic" style="left:436px;top:740.0px" width="20" height="20" viewBox="0 0 16 16" fill="#54aeff"><path d="M1.75 1A1.75 1.75 0 0 0 0 2.750v10.500C0 14.216.784 15 1.750 15h12.500A1.750 1.750 0 0 0 16 13.250v-8.500A1.750 1.750 0 0 0 14.250 3H7.500a.25.25 0 0 1-.2-.1l-.9-1.200C6.070 1.260 5.550 1 5 1H1.750Z"/></svg>
<svg class="ic" style="left:436px;top:791.0px" width="20" height="20" viewBox="0 0 16 16" fill="#54aeff"><path d="M1.75 1A1.75 1.75 0 0 0 0 2.750v10.500C0 14.216.784 15 1.750 15h12.500A1.750 1.750 0 0 0 16 13.250v-8.500A1.750 1.750 0 0 0 14.250 3H7.500a.25.25 0 0 1-.2-.1l-.9-1.200C6.070 1.260 5.550 1 5 1H1.750Z"/></svg>
<svg class="ic" style="left:435.8px;top:842.4px" width="20" height="20" viewBox="0 0 16 16" fill="#656d76"><path d="M2 1.750C2 .784 2.784 0 3.750 0h6.586c.464 0 .909.184 1.237.513l2.914 2.914c.329.328.513.773.513 1.237v9.586A1.750 1.750 0 0 1 13.250 16h-9.500A1.750 1.750 0 0 1 2 14.250Zm1.750-.25a.25.25 0 0 0-.25.25v12.500c0 .138.112.25.25.25h9.500a.25.25 0 0 0 .25-.25V6h-2.750A1.750 1.750 0 0 1 9 4.250V1.500Zm6.750.062V4.250c0 .138.112.25.25.25h2.688l-.011-.013-2.914-2.914-.013-.011Z"/></svg>
<a class="t" style='left:414.83px;top:237.00px;font-size:20px;-webkit-text-stroke:0.028em;color:#1267d4;transform:scaleX(0.9732);'>CatGame</a>
<span class="t" style='left:503.80px;top:237.20px;font-size:23px;color:#636c76;transform:scaleX(0.8143);'>/</span>
<span class="t" style='left:515.23px;top:237.00px;font-size:20px;-webkit-text-stroke:0.028em;color:#1f2328;transform:scaleX(0.9708);'>CatGame</span>
<span class="t" style='left:604.50px;top:237.20px;font-size:23px;color:#636c76;transform:scaleX(0.7857);'>/</span>
<span class="t" style='left:472.00px;top:309.50px;font-size:17.5px;-webkit-text-stroke:0.028em;color:#1f2328;transform:scaleX(0.9225);'>AnSSa1996</span>
<span class="t" style='left:568.16px;top:309.20px;font-size:18.2px;font-weight:300;color:#636c76;transform:scaleX(1.0366);'>러너 게임 제작중.</span>
<span class="t" style='left:1620.30px;top:311.00px;font-size:15px;color:#636c76;transform:scaleX(0.9635);'>f3921c1</span>
<span class="t" style='left:1676.00px;top:311.00px;font-size:15px;color:#636c76;'>·</span>
<span class="t" style='left:1684.40px;top:311.00px;font-size:15px;color:#636c76;transform:scaleX(0.9650);'>3 days ago</span>
<span class="t" style='left:1720.60px;top:242.00px;font-size:17.5px;-webkit-text-stroke:0.028em;color:#24292f;'>Add file</span>
<span class="t" style='left:436.79px;top:384.50px;font-size:15px;-webkit-text-stroke:0.02em;color:#636c76;transform:scaleX(1.0085);'>Name</span>
<span class="t" style='left:1018.39px;top:384.50px;font-size:15px;-webkit-text-stroke:0.02em;color:#636c76;transform:scaleX(1.0073);'>Last commit message</span>
<span class="t" style='left:1734.56px;top:384.50px;font-size:15px;-webkit-text-stroke:0.02em;color:#636c76;transform:scaleX(0.9400);'>Last commit date</span>
<span class="t" style='left:468.60px;top:435.20px;font-size:17.5px;letter-spacing:1.938px;'>..</span>
<span class="t" style='left:468.23px;top:484.60px;font-size:17.5px;transform:scaleX(0.9724);'>.idea/.idea.CatGame/.idea</span>
<span class="t" style='left:1018.42px;top:484.60px;font-size:17.5px;color:#636c76;transform:scaleX(0.9774);'>UIManager</span>
<span class="t" style='left:1108.74px;top:484.30px;font-size:18.2px;font-weight:300;color:#636c76;transform:scaleX(1.0556);'>토대 완성</span>
<span class="t" style='left:1745.80px;top:484.60px;font-size:17.5px;color:#636c76;transform:scaleX(0.9300);'>2 months ago</span>
<span class="t" style='left:468.22px;top:535.60px;font-size:17.5px;transform:scaleX(0.9774);'>.plastic</span>
<span class="t" style='left:1018.43px;top:535.60px;font-size:17.5px;color:#636c76;transform:scaleX(0.9733);'>Room</span>
<span class="t" style='left:1069.23px;top:535.30px;font-size:18.2px;font-weight:300;color:#636c76;transform:scaleX(1.0705);'>생성</span>
<span class="t" style='left:1745.80px;top:535.60px;font-size:17.5px;color:#636c76;transform:scaleX(0.9300);'>2 months ago</span>
<span class="t" style='left:469.20px;top:586.60px;font-size:17.5px;transform:scaleX(0.9116);'>Assets</span>
<span class="t" style='left:1018.36px;top:586.30px;font-size:18.2px;font-weight:300;color:#636c76;transform:scaleX(1.0412);'>러너 게임 제작중.</span>
<span class="t" style='left:469.20px;top:637.60px;font-size:17.5px;transform:scaleX(0.9317);'>GPM</span>
<span class="t" style='left:1019.40px;top:637.30px;font-size:18.2px;font-weight:300;color:#636c76;transform:scaleX(1.0318);'>유니티 프로젝트 첫 번째 복사</span>
<span class="t" style='left:1745.80px;top:637.60px;font-size:17.5px;color:#636c76;transform:scaleX(0.9300);'>2 months ago</span>
<span class="t" style='left:468.28px;top:688.60px;font-size:17.5px;transform:scaleX(0.9237);'>Packages</span>
<span class="t" style='left:1018.38px;top:688.60px;font-size:17.5px;color:#636c76;transform:scaleX(1.0191);'>Merge branch &#x27;main&#x27; of</span>
<span class="t" style='left:468.22px;top:739.60px;font-size:17.5px;transform:scaleX(0.9842);'>ProjectSettings</span>
<span class="t" style='left:1018.35px;top:739.30px;font-size:18.2px;font-weight:300;color:#636c76;transform:scaleX(1.0462);'>레이싱 게임 개발중</span>
<span class="t" style='left:469.20px;top:790.60px;font-size:17.5px;transform:scaleX(0.9977);'>ServerData/Android</span>
<span class="t" style='left:1018.41px;top:790.60px;font-size:17.5px;color:#636c76;transform:scaleX(0.9884);'>Missing Script</span>
<span class="t" style='left:1131.77px;top:790.30px;font-size:18.2px;font-weight:300;color:#636c76;transform:scaleX(1.0314);'>삭제 및</span>
<span class="t" style='left:1194.20px;top:790.60px;font-size:17.5px;color:#636c76;transform:scaleX(0.9482);'>GameRoom</span>
<span class="t" style='left:1289.96px;top:790.30px;font-size:18.2px;font-weight:300;color:#636c76;transform:scaleX(1.0445);'>연결</span>
<span class="t" style='left:468.16px;top:842.60px;font-size:17.5px;transform:scaleX(1.0448);'>.editorconfig</span>
<span class="t" style='left:1018.31px;top:842.60px;font-size:17.5px;color:#636c76;transform:scaleX(1.0936);'>utf-8</span>
<span class="t" style='left:1061.66px;top:842.30px;font-size:18.2px;font-weight:300;color:#636c76;transform:scaleX(1.0445);'>설정</span>
<span class="t" style='left:1745.80px;top:842.60px;font-size:17.5px;color:#636c76;transform:scaleX(0.9300);'>2 months ago</span>
<a class="t" style='left:1203.20px;top:688.60px;font-size:17.5px;color:#1267d4;'>https://github.com/AnSSa1996/CatGame</a>
</main>
<div class="a" style="left:0;top:863px;width:1752px;height:1px;background:#c4c4c4"></div>
<div class="a" style="left:0;top:864px;width:1752px;height:6px;background:#fff"></div>
</body></html>
